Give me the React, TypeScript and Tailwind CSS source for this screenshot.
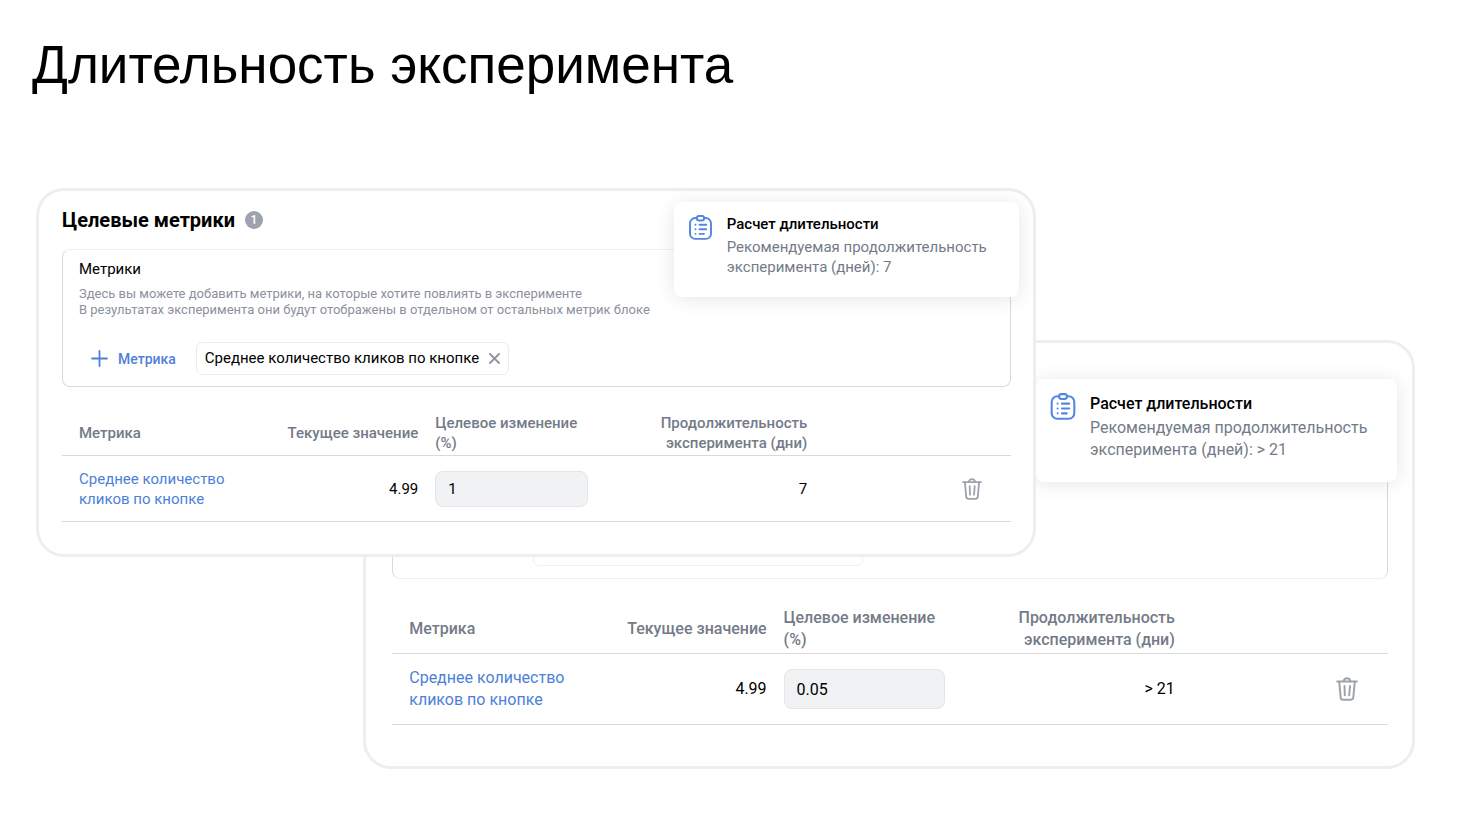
import { useId, useState } from "react";
import clsx from "clsx";

type CardSize = "sm" | "md";

interface Experiment {
    size: CardSize;
    current: string;
    change: string;
    days: string;
}

const shortRun: Experiment = { size: "sm", current: "4.99", change: "1", days: "7" };
const longRun: Experiment = { size: "md", current: "4.99", change: "0.05", days: "> 21" };

function ClipboardIcon({ className }: { className: string }) {
    return (
        <svg viewBox="0 0 24 26" fill="none" stroke="currentColor" strokeWidth="2" strokeLinecap="round" className={className}>
            <path d="M8 3.2H6.5A5.4 5.4 0 0 0 1.1 8.6v10.8a5.4 5.4 0 0 0 5.4 5.4h11a5.4 5.4 0 0 0 5.4-5.4V8.6a5.4 5.4 0 0 0-5.4-5.4H16" />
            <rect x="8.2" y="1.1" width="7.6" height="4.6" rx="2.3" />
            <path d="M11 10.2h7M11 14.9h7M11 19.6h4.600" />
            <path d="M6.8 10.2h.01M6.8 14.9h.01M6.8 19.6h.01" />
        </svg>
    );
}

function TrashIcon({ className }: { className: string }) {
    return (
        <svg viewBox="0 0 20 22" fill="none" stroke="currentColor" strokeWidth="1.8" strokeLinecap="round" strokeLinejoin="round" className={className}>
            <path d="M1 4.2h18" />
            <path d="M6.8 4C7.2 2 8.300 1.200 10 1.200s2.800.8 3.200 2.800" />
            <path d="M2.900 4.400l1.300 14.200c.1 1.400.9 2.200 2.300 2.200h7c1.400 0 2.200-.8 2.300-2.200l1.300-14.200" />
            <path d="M7.700 8.200l.3 8.600M12.700 8.200l-.7 8.600" />
        </svg>
    );
}

function DurationToast({ size, days }: { size: CardSize; days: string }) {
    return (
        <div
            role="status"
            className={clsx(
                "absolute flex gap-3.5 rounded-lg bg-white pl-3.5 shadow-[0_2px_20px_rgba(0,0,0,0.10)]",
                size === "sm" ? "top-[11px] right-3.5 w-[345px] pt-3 pb-5" : "top-9 right-[15px] w-[361px] pt-3.5 pb-[21px]"
            )}
        >
            <ClipboardIcon className={clsx("shrink-0 text-[#5486df]", size === "sm" ? "mt-px h-[25px] w-[25px]" : "h-[27px] w-[26px]")} />
            <div className={size === "sm" ? "text-[15px] leading-5" : "text-base leading-[22px]"}>
                <h3 className={clsx("font-medium", size === "sm" ? "mb-[3px]" : "mb-0.5")}>Расчет длительности</h3>
                <p className="text-[#747b88]">
                    Рекомендуемая продолжительность
                    <br />
                    эксперимента (дней): {days}
                </p>
            </div>
        </div>
    );
}

function MetricsTable({ size, current, change, days }: Experiment) {
    const [value, setValue] = useState(change);
    const inputId = useId();
    const small = size === "sm";

    return (
        <table className={clsx("w-full table-fixed border-collapse", small ? "mt-[26px] text-[15px] leading-5" : "mt-7 text-base leading-[22px]")}>
            <colgroup>
                <col className="w-[21%]" />
                <col className="w-[17.4%]" />
                <col className="w-[18%]" />
                <col className="w-[23%]" />
                <col />
            </colgroup>
            <thead>
                <tr className="border-b border-[#d9d9d9] text-[#747b88]">
                    <th className="pb-0.5 pl-[17px] text-left font-medium">Метрика</th>
                    <th className="pr-2 pb-0.5 text-right font-medium whitespace-nowrap">Текущее значение</th>
                    <th className="px-[9px] pb-0.5 text-left font-medium">
                        <label htmlFor={inputId}>Целевое изменение (%)</label>
                    </th>
                    <th className="pr-2 pb-0.5 text-right font-medium">
                        Продолжительность
                        <br />
                        эксперимента (дни)
                    </th>
                    <th></th>
                </tr>
            </thead>
            <tbody>
                <tr className={clsx("border-b border-[#d9d9d9]", small ? "h-[66px]" : "h-[71px]")}>
                    <td className="pl-[17px]">
                        <a href="#" className="block text-[#4d7fd9]">
                            Среднее количество
                            <br />
                            кликов по кнопке
                        </a>
                    </td>
                    <td className="pr-2 text-right">{current}</td>
                    <td className="px-[9px]">
                        <input
                            id={inputId}
                            type="text"
                            value={value}
                            onChange={(e) => setValue(e.target.value)}
                            className={clsx("block w-full rounded-lg border border-[#e3e5e8] bg-[#f1f2f4] px-3 outline-none", small ? "h-9" : "h-10")}
                        />
                    </td>
                    <td className="pr-2 text-right">{days}</td>
                    <td className={small ? "pr-[29px]" : "pr-[30px]"}>
                        <button type="button" aria-label="Удалить" className="ml-auto block text-[#9da2ad]">
                            <TrashIcon className={small ? "h-[22px] w-5" : "h-6 w-[22px]"} />
                        </button>
                    </td>
                </tr>
            </tbody>
        </table>
    );
}

function TargetMetrics() {
    return (
        <>
            <div className="flex items-center gap-2.5">
                <h2 className="text-xl leading-6 font-bold">Целевые метрики</h2>
                <span className="flex size-[18px] items-center justify-center rounded-full bg-[#9da2ad] text-xs font-medium text-white">1</span>
            </div>
            <div className="mt-[17px] rounded-lg border border-[#d9d9d9] border-t-[#efefef] px-4 pt-[9px] pb-[11px]">
                <h3 className="text-[15px] leading-5">Метрики</h3>
                <p className="mt-[7px] text-[13px] leading-4 text-[#8b919d]">
                    Здесь вы можете добавить метрики, на которые хотите повлиять в эксперименте
                    <br />
                    В результатах эксперимента они будут отображены в отдельном от остальных метрик блоке
                </p>
                <div className="mt-6 flex items-center gap-5 pl-3">
                    <button type="button" className="flex items-center gap-2.5 text-sm font-medium text-[#4d7fd9]">
                        <svg viewBox="0 0 17 17" stroke="currentColor" strokeWidth="1.8" strokeLinecap="round" className="size-[17px]">
                            <path d="M8.5 1v15M1 8.5h15" />
                        </svg>
                        Метрика
                    </button>
                    <div className="flex h-[33px] items-center gap-2.5 rounded-md border border-[#ececec] px-2 text-[15px]">
                        Среднее количество кликов по кнопке
                        <button type="button" aria-label="Убрать метрику" className="text-[#8f95a0]">
                            <svg viewBox="0 0 11 11" stroke="currentColor" strokeWidth="1.8" strokeLinecap="round" className="size-[11px]">
                                <path d="M1 1l9 9M10 1l-9 9" />
                            </svg>
                        </button>
                    </div>
                </div>
            </div>
        </>
    );
}

export default function App() {
    return (
        <main className="min-h-screen bg-white px-9 pt-[35px] pb-12 font-[Roboto,sans-serif] text-black">
            <h1 className="-ml-1 font-['Liberation_Sans',Arial,sans-serif] text-[53px] leading-[60px]">Длительность эксперимента</h1>

            <div className="mt-[93px] mr-[17px] grid grid-cols-[327fr_672fr_379fr] items-start">
                <section className="relative z-10 col-span-2 col-start-1 row-start-1 rounded-[28px] border-[3px] border-[#eeeeee] bg-white pt-[17px] pr-[22px] pb-8 pl-[23px]">
                    <TargetMetrics />
                    <MetricsTable {...shortRun} />
                    <DurationToast size={shortRun.size} days={shortRun.days} />
                </section>

                {/* second card slides under the first one, only its lower part is filled */}
                <section className="relative col-span-2 col-start-2 row-start-1 mt-[152px] rounded-[28px] border-[3px] border-[#eeeeee] bg-white pt-[60px] pr-6 pb-[41px] pl-[26px]">
                    <div className="flex h-44 items-end rounded-lg border border-[#d9d9d9] border-b-[#efefef] pb-3 pl-[140px]">
                        <div className="h-9 w-[330px] rounded-md border border-[#f0f0f0]" />
                    </div>
                    <MetricsTable {...longRun} />
                    <DurationToast size={longRun.size} days={longRun.days} />
                </section>
            </div>
        </main>
    );
}
